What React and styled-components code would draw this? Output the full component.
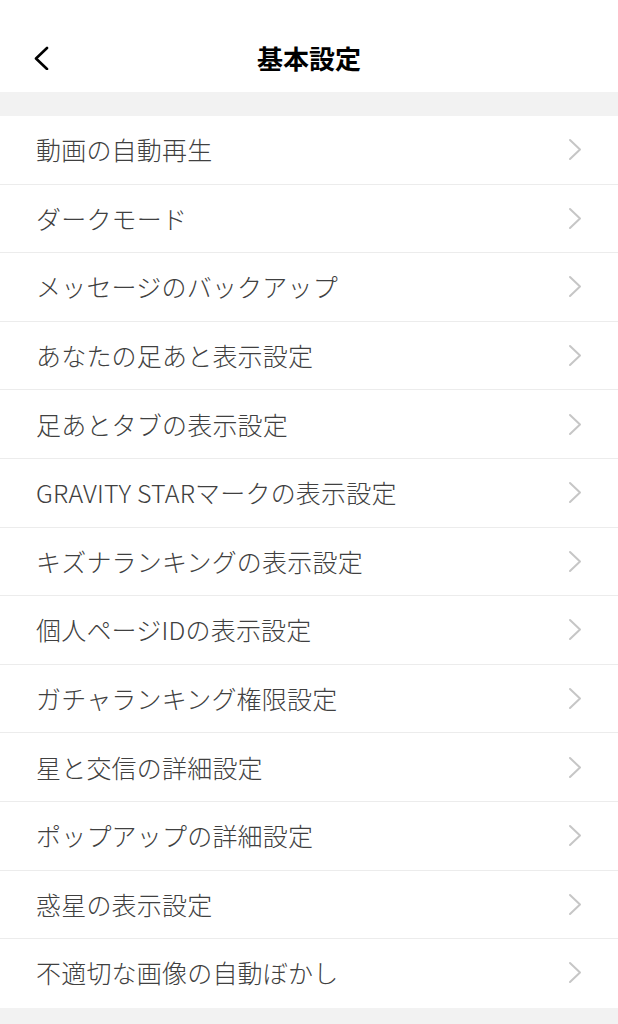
import React from "react";
import styled, { createGlobalStyle } from "styled-components";

const GlobalStyle = createGlobalStyle`
  html, body { margin: 0; padding: 0; background: #f2f2f2; }
  body { font-family: "Noto Sans CJK JP", "Noto Sans", sans-serif; }
`;

const Page = styled.div`
  width: 618px;
  min-height: 1024px;
  background: #f2f2f2;
  display: flex;
  flex-direction: column;
`;

const Header = styled.header`
  height: 92px;
  box-sizing: border-box;
  padding-top: 24px;
  background: #fff;
  display: grid;
  grid-template-columns: 80px 1fr 80px;
  align-items: center;
`;

const BackButton = styled.button`
  border: 0;
  background: none;
  padding: 0 0 0 33px;
  height: 68px;
  display: flex;
  align-items: center;
  justify-content: flex-start;
  cursor: pointer;
`;

const Title = styled.h1`
  margin: 0;
  text-align: center;
  font-size: 26px;
  font-weight: 700;
  color: #000;
  line-height: 1;
`;

const Spacer = styled.div`
  height: 24px;
`;

const List = styled.ul`
  list-style: none;
  margin: 0;
  padding: 0;
  background: #fff;
`;

const Row = styled.li`
  height: 67.6px;
  display: flex;
  align-items: center;
  justify-content: space-between;
  padding: 0 36px;
  border-bottom: 1px solid ${(p) => (p.$last ? "transparent" : "#ececec")};
`;

const Label = styled.span`
  font-size: 25px;
  color: #404040;
  font-weight: 300;
  letter-spacing: 0.2px;
  line-height: 1;
`;

const Chevron = ({ color = "#c6c6c6" }) => (
  <svg width="14" height="23" viewBox="0 0 14 23" fill="none">
    <path d="M2 2 L12 11.5 L2 21" stroke={color} strokeWidth="2" strokeLinecap="round" strokeLinejoin="round" />
  </svg>
);

const BackIcon = () => (
  <svg width="16" height="24" viewBox="0 0 16 24" fill="none">
    <path d="M14 2 L3 12.5 L14 23" stroke="#000" strokeWidth="2.6" strokeLinecap="round" strokeLinejoin="round" />
  </svg>
);

const items = [
  "動画の自動再生",
  "ダークモード",
  "メッセージのバックアップ",
  "あなたの足あと表示設定",
  "足あとタブの表示設定",
  "GRAVITY STARマークの表示設定",
  "キズナランキングの表示設定",
  "個人ページIDの表示設定",
  "ガチャランキング権限設定",
  "星と交信の詳細設定",
  "ポップアップの詳細設定",
  "惑星の表示設定",
  "不適切な画像の自動ぼかし",
];

export default function App() {
  return (
    <>
      <GlobalStyle />
      <Page>
        <Header>
          <BackButton aria-label="戻る">
            <BackIcon />
          </BackButton>
          <Title>基本設定</Title>
          <div />
        </Header>
        <Spacer />
        <List>
          {items.map((t, i) => (
            <Row key={t} $last={i === items.length - 1}>
              <Label>{t}</Label>
              <Chevron />
            </Row>
          ))}
        </List>
      </Page>
    </>
  );
}
